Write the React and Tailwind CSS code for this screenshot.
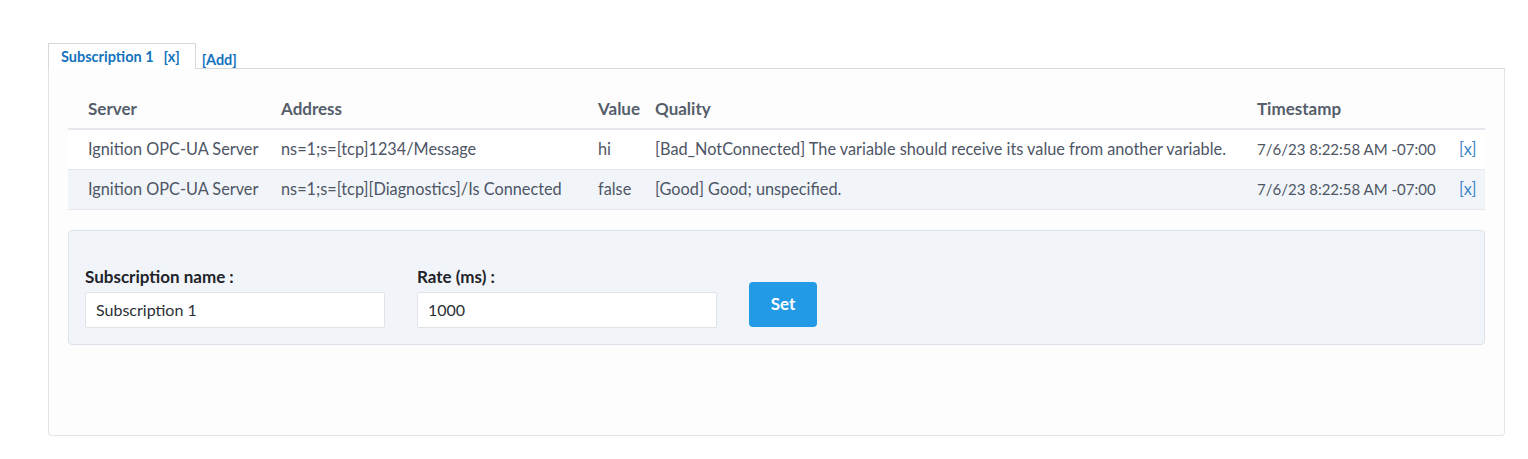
import React, { useState } from "react";

const rows = [
  {
    server: "Ignition OPC-UA Server",
    address: "ns=1;s=[tcp]1234/Message",
    value: "hi",
    quality: "[Bad_NotConnected] The variable should receive its value from another variable.",
    timestamp: "7/6/23 8:22:58 AM -07:00",
  },
  {
    server: "Ignition OPC-UA Server",
    address: "ns=1;s=[tcp][Diagnostics]/Is Connected",
    value: "false",
    quality: "[Good] Good; unspecified.",
    timestamp: "7/6/23 8:22:58 AM -07:00",
  },
];

function App() {
  const [name, setName] = useState("Subscription 1");
  const [rate, setRate] = useState("1000");

  return (
    <div
      className="bg-white pl-[48px] pr-[23px] pt-[43px] pb-[23px]"
      style={{ fontFamily: "Lato, 'Noto Sans', sans-serif" }}
    >
      {/* tabs */}
      <div className="flex items-end">
        <div className="h-[26px] pl-[12px] pr-[15px] flex items-center border border-b-0 border-[#d6d9dd] bg-white text-[14.5px] font-bold text-[#1573bd]">
          <span>Subscription 1</span>
          <span className="ml-[10px]">[x]</span>
        </div>
        <div className="flex-1 border-b border-[#d6d9dd] h-[22px] flex items-center">
          <span className="ml-[6px] text-[14.5px] font-bold text-[#1573bd] mt-[5px]">[Add]</span>
        </div>
      </div>

      {/* panel */}
      <div className="border border-t-0 border-[#e2e4e7] rounded-b-[4px] bg-[#fdfdfd] px-[19px] pt-[20px] h-[367px]">
        <table className="w-full border-collapse text-[16.3px]">
          <thead>
            <tr className="h-[40px] text-left text-[#565d6b] text-[17px] font-bold border-b-2 border-[#e4e8ee]">
              <th className="pl-[20px] w-[213px]">Server</th>
              <th className="w-[317px]">Address</th>
              <th className="w-[57px]">Value</th>
              <th>Quality</th>
              <th className="w-[202px]">Timestamp</th>
              <th className="w-[26px]"></th>
            </tr>
          </thead>
          <tbody className="text-[#4e5565]">
            {rows.map((r, i) => (
              <tr
                key={i}
                className={
                  "h-[40px] border-b border-[#e4e8ee] " +
                  (i % 2 === 1 ? "bg-[#f1f5f9]" : "bg-white")
                }
              >
                <td className="pl-[20px]">{r.server}</td>
                <td>{r.address}</td>
                <td>{r.value}</td>
                <td>{r.quality}</td>
                <td className="text-[15px]">{r.timestamp}</td>
                <td className="text-[#3f87c9]">[x]</td>
              </tr>
            ))}
          </tbody>
        </table>

        <div className="mt-[20px] h-[115px] bg-[#f1f5f9] border border-[#dde3ea] rounded-[4px] px-[16px] pt-[36px] flex items-start gap-[32px]">
          <div className="flex flex-col">
            <label className="text-[17px] font-bold text-[#1f2329] leading-[20px] mb-[5px]">
              Subscription name :
            </label>
            <input
              value={name}
              onChange={(e) => setName(e.target.value)}
              className="w-[300px] h-[36px] bg-white border border-[#dfe3e8] rounded-[2px] px-[10px] text-[16px] text-[#2b2f36] outline-none"
            />
          </div>
          <div className="flex flex-col">
            <label className="text-[17px] font-bold text-[#1f2329] leading-[20px] mb-[5px]">
              Rate (ms) :
            </label>
            <input
              value={rate}
              onChange={(e) => setRate(e.target.value)}
              className="w-[300px] h-[36px] bg-white border border-[#dfe3e8] rounded-[2px] px-[10px] text-[16px] text-[#2b2f36] outline-none"
            />
          </div>
          <button className="mt-[15px] w-[68px] h-[45px] bg-[#229ae6] rounded-[4px] text-white font-bold text-[17px]">
            Set
          </button>
        </div>
      </div>
    </div>
  );
}

export default App;
